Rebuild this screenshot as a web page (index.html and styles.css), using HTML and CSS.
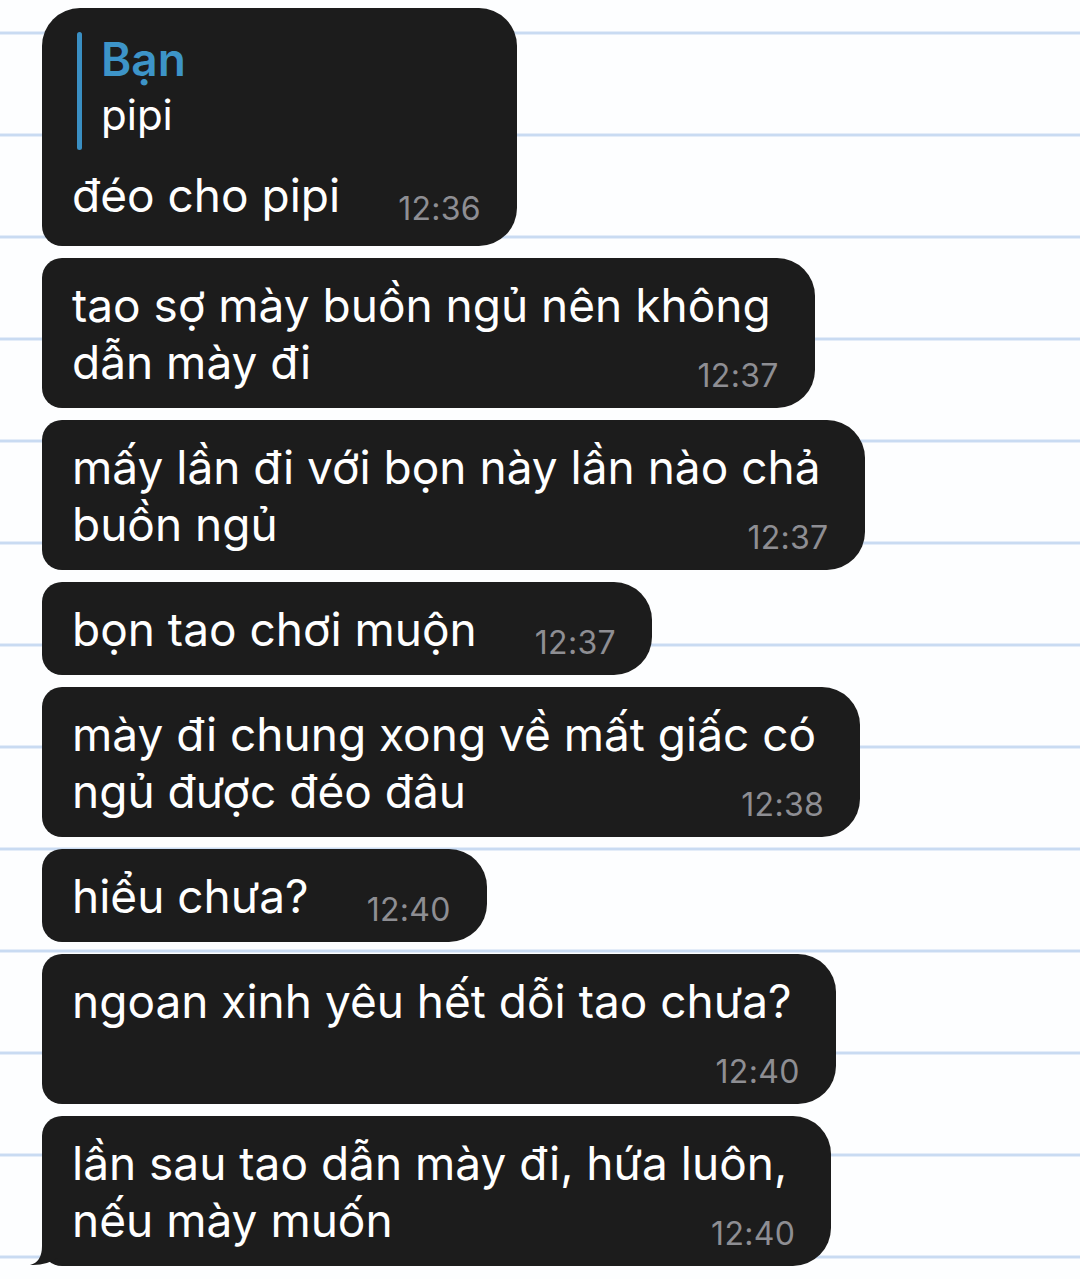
FILE: index.html
```html
<!DOCTYPE html>
<html lang="vi">
<head>
    <meta charset="UTF-8">
    <meta name="viewport" content="width=device-width, initial-scale=1.0">
    <title>Chat</title>
    <link rel="stylesheet" href="styles.css">
</head>
<body>

    <div class="chat">
        <div class="bubble first">
            <div class="reply">
                <div class="reply-bar"></div>
                <div class="reply-text">
                    <div class="reply-name">Bạn</div>
                    <div class="reply-msg">pipi</div>
                </div>
            </div>
            <div class="last"><span>đéo cho pipi</span><span class="time">12:36</span></div>
        </div>

        <div class="bubble">
            <div class="line">tao sợ mày buồn ngủ nên không</div>
            <div class="last"><span>dẫn mày đi</span><span class="time">12:37</span></div>
        </div>

        <div class="bubble">
            <div class="line">mấy lần đi với bọn này lần nào chả</div>
            <div class="last"><span>buồn ngủ</span><span class="time">12:37</span></div>
        </div>

        <div class="bubble">
            <div class="last"><span>bọn tao chơi muộn</span><span class="time">12:37</span></div>
        </div>

        <div class="bubble">
            <div class="line">mày đi chung xong về mất giấc có</div>
            <div class="last"><span>ngủ được đéo đâu</span><span class="time">12:38</span></div>
        </div>

        <div class="bubble">
            <div class="last"><span>hiểu chưa?</span><span class="time">12:40</span></div>
        </div>

        <div class="bubble">
            <div class="line">ngoan xinh yêu hết dỗi tao chưa?</div>
            <div class="last"><span></span><span class="time">12:40</span></div>
        </div>

        <div class="bubble tail">
            <div class="line">lần sau tao dẫn mày đi, hứa luôn,</div>
            <div class="last"><span>nếu mày muốn</span><span class="time">12:40</span></div>
            <svg class="tail-shape" width="32" height="40" viewBox="0 0 32 40">
                <path d="M14 0 L14 20 Q14 36 2 39 Q18 40 31 31 L31 0 Z" fill="#1c1c1c"/>
            </svg>
        </div>
    </div>

</body>
</html>
```

FILE: styles.css
```css
html {
    background-color: #fdfeff;
}

body {
    margin: 0;
    min-height: 1279px;
    font-family: Inter, "Noto Sans", sans-serif;
    background-color: #fdfeff;
    /* notebook lines, one every 102px */
    background-image: repeating-linear-gradient(
        to bottom,
        transparent 0,
        transparent 31px,
        #e4edf9 31px,
        #e4edf9 32px,
        #c9dbf2 32px,
        #c9dbf2 34px,
        #e4edf9 34px,
        #e4edf9 35px,
        transparent 35px,
        transparent 102px
    );
}

.chat {
    display: flex;
    flex-direction: column;
    align-items: flex-start;
    gap: 12px;
    padding: 8px 0 0 42px;
}

.bubble {
    position: relative;
    display: flex;
    flex-direction: column;
    background-color: #1c1c1c;
    color: #ffffff;
    font-size: 46px;
    line-height: 57px;
    padding: 19px 36px 17px 30px;
    border-radius: 20px 38px 38px 20px;
}

.bubble.first {
    border-top-left-radius: 38px;
    padding-top: 24px;
    padding-bottom: 22px;
}

.line {
    padding-right: 8px;
    white-space: nowrap;
}

.last {
    display: flex;
    justify-content: space-between;
    align-items: flex-end;
    gap: 58px;
    min-height: 57px;
    white-space: nowrap;
}

.time {
    font-size: 32px;
    line-height: 31px;
    letter-spacing: 0.3px;
    color: #8e8e93;
}

/* Quoted reply */
.reply {
    display: flex;
    gap: 19px;
    margin-left: 5px;
    margin-bottom: 17px;
}

.reply-bar {
    width: 5px;
    border-radius: 3px;
    background-color: #3a8fc3;
}

.reply-text {
    line-height: 55px;
    padding-bottom: 8px;
}

.reply-name {
    color: #3d94c8;
    font-size: 46px;
    font-weight: 600;
}

.reply-msg {
    font-size: 42px;
    color: #ffffff;
}

.tail-shape {
    position: absolute;
    left: -14px;
    bottom: 0;
}
```
